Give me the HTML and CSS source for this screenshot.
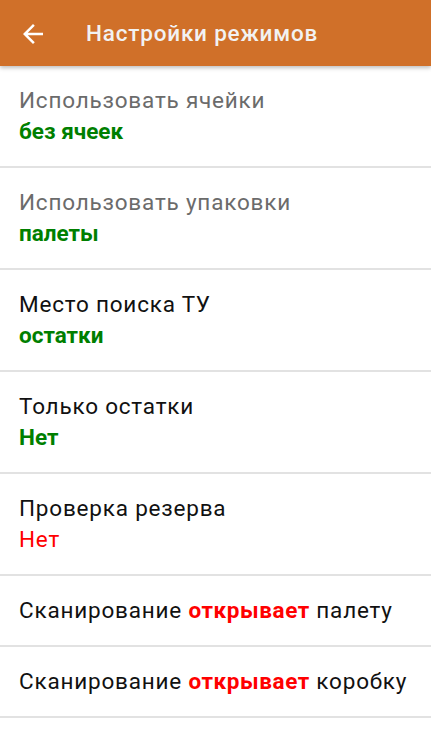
FILE: index.html
```html
<!DOCTYPE html>
<html lang="ru">
<head>
<meta charset="UTF-8">
<meta name="viewport" content="width=device-width, initial-scale=1.0">
<title>Настройки режимов</title>
<link rel="stylesheet" href="styles.css">
</head>
<body>
<div class="toolbar">
    <svg class="back" viewBox="0 0 24 24" width="30" height="30">
        <path d="M20 11H7.83l5.59-5.59L12 4l-8 8 8 8 1.41-1.41L7.83 13H20v-2z" fill="#ffffff"/>
    </svg>
    <div class="title">Настройки режимов</div>
</div>

<div class="list">
    <div class="item">
        <div class="label disabled">Использовать ячейки</div>
        <div class="value green">без ячеек</div>
    </div>
    <div class="item">
        <div class="label disabled">Использовать упаковки</div>
        <div class="value green">палеты</div>
    </div>
    <div class="item">
        <div class="label">Место поиска ТУ</div>
        <div class="value green">остатки</div>
    </div>
    <div class="item">
        <div class="label">Только остатки</div>
        <div class="value green">Нет</div>
    </div>
    <div class="item">
        <div class="label">Проверка резерва</div>
        <div class="value red">Нет</div>
    </div>
    <div class="item short">
        <div class="label">Сканирование <b class="hl">открывает</b> палету</div>
    </div>
    <div class="item short">
        <div class="label">Сканирование <b class="hl">открывает</b> коробку</div>
    </div>
</div>
</body>
</html>
```

FILE: styles.css
```css
body{
    margin: 0;
    font-family: Roboto, "Noto Sans", sans-serif;
    background-color: #ffffff;
}
.toolbar{
    display: flex;
    align-items: center;
    height: 66px;
    background-color: #d07029;
    box-shadow: 0 2px 4px rgba(0, 0, 0, 0.25);
    position: relative;
}
.back{
    margin-left: 18px;
    margin-top: 2px;
}
.title{
    margin-left: 38px;
    font-size: 22.5px;
    font-weight: 500;
    letter-spacing: 0.8px;
    color: #f2f2f2;
}
.item{
    display: flex;
    flex-direction: column;
    justify-content: center;
    height: 100px;
    padding-left: 19px;
    border-bottom: 2px solid #e2e2e2;
}
.item.short{
    height: 69px;
}
.label{
    font-size: 22.5px;
    line-height: 31px;
    letter-spacing: 0.8px;
    color: #111111;
}
.label.disabled{
    color: #6b6b6b;
}
.value{
    font-size: 22.5px;
    line-height: 31px;
}
.green{
    color: #007f00;
    font-weight: 700;
}
.red{
    color: #ff0000;
    letter-spacing: 0.8px;
}
.hl{
    color: #ff0000;
    font-weight: 700;
    letter-spacing: 0.6px;
}
```
